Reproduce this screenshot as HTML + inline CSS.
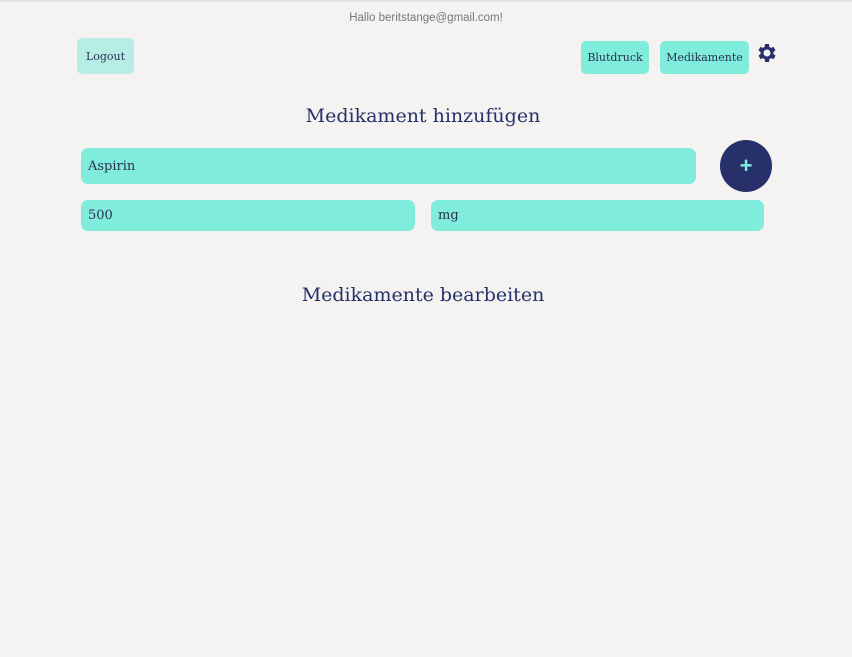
<!DOCTYPE html>
<html><head><style>
body{margin:0;width:852px;height:657px;background:#f4f3f1;font-family:"DejaVu Serif","Liberation Serif",serif;color:#27306a;position:relative;overflow:hidden}
.a{position:absolute}
.btn{position:absolute;border-radius:5px;background:#7fecdc;font-size:11px;color:#2b3050;display:flex;align-items:center;justify-content:center}
.inp{position:absolute;border-radius:7px;background:#80ecdb;font-size:13px;color:#2b3050;padding-left:7px;box-sizing:border-box;display:flex;align-items:center}
h2{position:absolute;margin:0;font-weight:normal;font-size:19px;width:852px;text-align:center;left:-3px}
</style></head><body>
<div class="a" style="top:0;left:0;width:852px;height:2px;background:#e2e2e2"></div>
<div class="a" style="top:12px;width:852px;text-align:center;font-size:11.5px;color:#777;font-family:'Liberation Sans',sans-serif">Hallo beritstange@gmail.com!</div>
<div class="btn" style="left:77px;top:38px;width:57px;height:36px;background:#b6eee5">Logout</div>
<div class="btn" style="left:581px;top:41px;width:68px;height:33px">Blutdruck</div>
<div class="btn" style="left:660px;top:41px;width:89px;height:33px">Medikamente</div>
<svg class="a" style="left:755px;top:41px" width="24" height="24" viewBox="0 0 24 24"><path fill="#27306a" d="M19.4 13a7.5 7.5 0 000-2l2.1-1.6-2-3.5-2.5 1a7 7 0 00-1.7-1L15 3h-4l-.4 2.9a7 7 0 00-1.7 1l-2.5-1-2 3.5L6.6 11a7.5 7.5 0 000 2l-2.1 1.6 2 3.5 2.5-1a7 7 0 001.7 1L11 21h4l.4-2.9a7 7 0 001.7-1l2.5 1 2-3.5zM13 15.5a3.5 3.5 0 110-7 3.5 3.5 0 010 7z" transform="translate(-1 0)"/></svg>
<h2 style="top:105px">Medikament hinzufügen</h2>
<div class="inp" style="left:81px;top:148px;width:615px;height:36px">Aspirin</div>
<div class="a" style="left:720px;top:140px;width:52px;height:52px;border-radius:50%;background:#27306a;color:#7fecdc;font-size:22px;font-weight:bold;display:flex;align-items:center;justify-content:center;font-family:'Liberation Sans',sans-serif">+</div>
<div class="inp" style="left:81px;top:200px;width:334px;height:31px">500</div>
<div class="inp" style="left:431px;top:200px;width:333px;height:31px">mg</div>
<h2 style="top:284px">Medikamente bearbeiten</h2>
</body></html>
